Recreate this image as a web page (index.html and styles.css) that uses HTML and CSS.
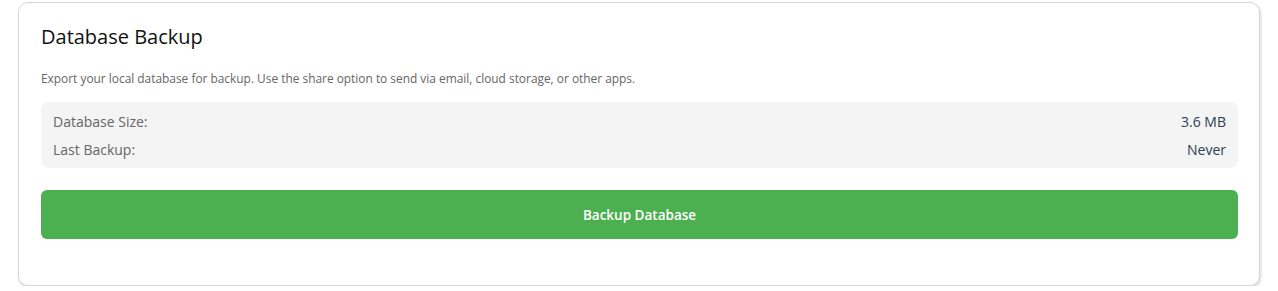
FILE: index.html
```html
<!DOCTYPE html>
<html lang="en">

<head>
    <meta charset="UTF-8">
    <meta name="viewport" content="width=device-width, initial-scale=1.0">
    <title>Database Backup</title>
    <link rel="stylesheet" href="styles.css">
</head>

<body>
    <div class="card">
        <h2 class="card-title">Database Backup</h2>
        <p class="card-desc">Export your local database for backup. Use the share option to send via email, cloud storage, or other apps.</p>
        <div class="info-box">
            <div class="info-row">
                <span class="info-label">Database Size:</span>
                <span class="info-value">3.6 MB</span>
            </div>
            <div class="info-row">
                <span class="info-label">Last Backup:</span>
                <span class="info-value">Never</span>
            </div>
        </div>
        <button class="backup-btn">Backup Database</button>
    </div>
</body>

</html>
```

FILE: styles.css
```css
body {
    margin: 0;
    padding: 2px 18px 0 18px;
    font-family: "Open Sans", Arial, sans-serif;
    background-color: #fff;
}

.card {
    background-color: #fff;
    border: 1px solid #d6d6d6;
    border-radius: 10px;
    box-shadow: 1px 2px 3px rgba(0, 0, 0, 0.15);
    padding: 20px 21px 46px 22px;
}

.card-title {
    margin: 0;
    font-size: 20px;
    font-weight: 400;
    color: #111;
    line-height: 27px;
}

.card-desc {
    margin: 19px 0 15px 0;
    font-size: 11.9px;
    color: #666;
    line-height: 18px;
}

.info-box {
    background-color: #f4f4f4;
    border-radius: 8px;
    padding: 6px 12px 4px 12px;
}

.info-row {
    display: flex;
    justify-content: space-between;
    font-size: 14px;
    line-height: 28px;
}

.info-label {
    color: #666;
}

.info-value {
    color: #2c3e50;
}

.backup-btn {
    display: block;
    width: 100%;
    margin-top: 22px;
    height: 49px;
    border: none;
    border-radius: 6px;
    background-color: #4caf50;
    color: #fff;
    font-family: "Open Sans", Arial, sans-serif;
    font-size: 13.5px;
    font-weight: 600;
    cursor: pointer;
}
```
